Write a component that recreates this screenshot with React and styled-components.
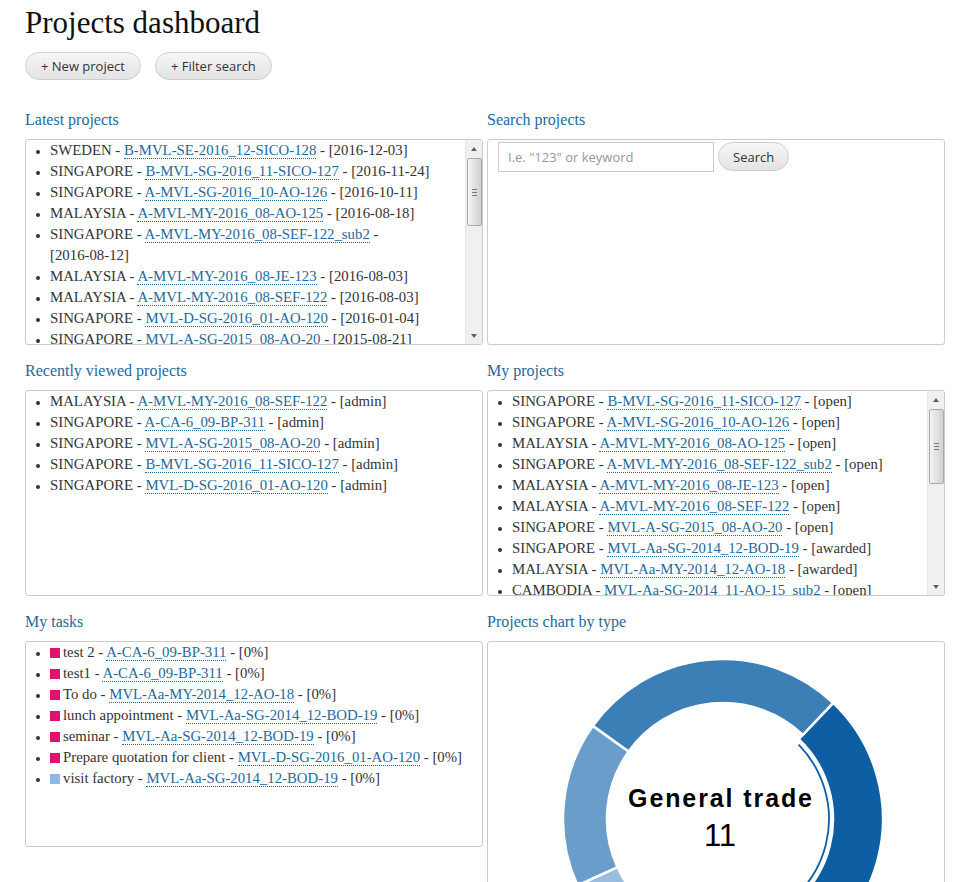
import React from 'react'
import styled, { createGlobalStyle } from 'styled-components'

const GlobalStyle = createGlobalStyle`
	body {
		margin: 0;
		background: #fff;
		color: #333;
		font-family: "Liberation Serif", "Times New Roman", serif;
	}
`

const Page = styled.div`
	padding: 4px 21px 0 25px;
`

const Title = styled.h1`
	margin: 0;
	font-size: 31px;
	font-weight: normal;
	line-height: 38px;
	color: #111;
`

const Actions = styled.div`
	display: flex;
	gap: 14px;
	margin-top: 10px;
`

const PillButton = styled.button`
	height: ${(p) => (p.$small ? '29px' : '28px')};
	padding: 0 ${(p) => (p.$small ? '14px' : '15px')};
	border: 1px solid #cfcfcf;
	border-radius: 15px;
	background: linear-gradient(to bottom, #f6f6f6, #e3e3e3);
	color: #333;
	font-family: "Open Sans", sans-serif;
	font-size: 13px;
	cursor: pointer;
	white-space: nowrap;
`

const Grid = styled.div`
	display: grid;
	grid-template-columns: 458px 458px;
	column-gap: 4px;
	row-gap: 16px;
	align-items: start;
	margin-top: 30px;
`

const Section = styled.section`
	display: flex;
	flex-direction: column;
`

const Heading = styled.h2`
	margin: 0 0 9px;
	font-size: 16px;
	font-weight: normal;
	line-height: 20px;
	color: #25699b;
`

const Box = styled.div`
	display: flex;
	height: ${(p) => p.$height || 206}px;
	box-sizing: border-box;
	border: 1px solid #cccccc;
	border-radius: 3px;
	overflow: hidden;
	background: #fff;
`

const Content = styled.div`
	flex: 1;
	min-width: 0;
	overflow: hidden;
`

const ScrollBar = styled.div`
	display: flex;
	flex-direction: column;
	flex: 0 0 17px;
	background: #f0f0f0;
	border-left: 1px solid #e8e8e8;
	box-sizing: border-box;
`

const Arrow = styled.div`
	flex: 0 0 17px;
	display: flex;
	align-items: center;
	justify-content: center;

	&::before {
		content: "";
		width: 0;
		height: 0;
		border-left: 3.5px solid transparent;
		border-right: 3.5px solid transparent;
		${(p) => (p.$down ? 'border-top: 4px solid #606060;' : 'border-bottom: 4px solid #606060;')}
	}
`

const Track = styled.div`
	flex: 1;
	display: flex;
	flex-direction: column;
	align-items: center;
`

const Thumb = styled.div`
	width: 15px;
	box-sizing: border-box;
	border: 1px solid #a9a9a9;
	border-radius: 2px;
	background-color: #dcdcdc;
	background-image:
		linear-gradient(#7a7a7a, #7a7a7a),
		linear-gradient(#7a7a7a, #7a7a7a),
		linear-gradient(#7a7a7a, #7a7a7a),
		linear-gradient(to right, #f4f4f4, #d0d0d0);
	background-size: 5px 1px, 5px 1px, 5px 1px, 100% 100%;
	background-position: center calc(50% - 3px), center 50%, center calc(50% + 3px), 0 0;
	background-repeat: no-repeat;
`

const List = styled.ul`
	margin: 0;
	padding: 0 ${(p) => p.$padRight || 0}px 0 24px;
	font-size: 14.8px;
	line-height: 21px;
	color: #333;
	list-style: disc;

	li::marker {
		font-size: 12px;
	}
`

const Link = styled.a`
	color: #25699b;
	text-decoration: none;
	border-bottom: 1px dotted #25699b;
	cursor: pointer;
`

const Tag = styled.span`
	white-space: nowrap;
`

const Swatch = styled.span`
	display: inline-block;
	width: 10px;
	height: 10px;
	margin-right: 3px;
	vertical-align: -1px;
	background: ${(p) => p.$color};
`

const SearchRow = styled.form`
	display: flex;
	gap: 4px;
	padding: 2px 10px;
`

const SearchInput = styled.input`
	width: 216px;
	height: 30px;
	box-sizing: border-box;
	padding: 0 9px;
	border: 1px solid #cccccc;
	font-family: "Open Sans", sans-serif;
	font-size: 13px;
	color: #333;
	outline: none;

	&::placeholder {
		color: #999;
	}
`

const latest = [
	['SWEDEN', 'B-MVL-SE-2016_12-SICO-128', '2016-12-03'],
	['SINGAPORE', 'B-MVL-SG-2016_11-SICO-127', '2016-11-24'],
	['SINGAPORE', 'A-MVL-SG-2016_10-AO-126', '2016-10-11'],
	['MALAYSIA', 'A-MVL-MY-2016_08-AO-125', '2016-08-18'],
	['SINGAPORE', 'A-MVL-MY-2016_08-SEF-122_sub2', '2016-08-12'],
	['MALAYSIA', 'A-MVL-MY-2016_08-JE-123', '2016-08-03'],
	['MALAYSIA', 'A-MVL-MY-2016_08-SEF-122', '2016-08-03'],
	['SINGAPORE', 'MVL-D-SG-2016_01-AO-120', '2016-01-04'],
	['SINGAPORE', 'MVL-A-SG-2015_08-AO-20', '2015-08-21'],
	['SINGAPORE', 'MVL-Aa-SG-2014_12-BOD-19', '2014-12-15'],
	['MALAYSIA', 'MVL-Aa-MY-2014_12-AO-18', '2014-12-09'],
	['CAMBODIA', 'MVL-Aa-SG-2014_11-AO-15_sub2', '2014-11-27'],
]

const recent = [
	['MALAYSIA', 'A-MVL-MY-2016_08-SEF-122'],
	['SINGAPORE', 'A-CA-6_09-BP-311'],
	['SINGAPORE', 'MVL-A-SG-2015_08-AO-20'],
	['SINGAPORE', 'B-MVL-SG-2016_11-SICO-127'],
	['SINGAPORE', 'MVL-D-SG-2016_01-AO-120'],
]

const mine = [
	['SINGAPORE', 'B-MVL-SG-2016_11-SICO-127', 'open'],
	['SINGAPORE', 'A-MVL-SG-2016_10-AO-126', 'open'],
	['MALAYSIA', 'A-MVL-MY-2016_08-AO-125', 'open'],
	['SINGAPORE', 'A-MVL-MY-2016_08-SEF-122_sub2', 'open'],
	['MALAYSIA', 'A-MVL-MY-2016_08-JE-123', 'open'],
	['MALAYSIA', 'A-MVL-MY-2016_08-SEF-122', 'open'],
	['SINGAPORE', 'MVL-A-SG-2015_08-AO-20', 'open'],
	['SINGAPORE', 'MVL-Aa-SG-2014_12-BOD-19', 'awarded'],
	['MALAYSIA', 'MVL-Aa-MY-2014_12-AO-18', 'awarded'],
	['CAMBODIA', 'MVL-Aa-SG-2014_11-AO-15_sub2', 'open'],
	['CAMBODIA', 'MVL-Aa-KH-2014_11-AO-15', 'open'],
]

const tasks = [
	['#e5106d', 'test 2', 'A-CA-6_09-BP-311'],
	['#e5106d', 'test1', 'A-CA-6_09-BP-311'],
	['#e5106d', 'To do', 'MVL-Aa-MY-2014_12-AO-18'],
	['#e5106d', 'lunch appointment', 'MVL-Aa-SG-2014_12-BOD-19'],
	['#e5106d', 'seminar', 'MVL-Aa-SG-2014_12-BOD-19'],
	['#e5106d', 'Prepare quotation for client', 'MVL-D-SG-2016_01-AO-120'],
	['#8fb8ea', 'visit factory', 'MVL-Aa-SG-2014_12-BOD-19'],
]

// donut slices, angles in degrees clockwise from 12 o'clock
const slices = [
	{ from: 43.5, to: 165, color: '#0d5ea3', active: true },
	{ from: 165, to: 207, color: '#c3d8ee' },
	{ from: 207, to: 245.5, color: '#9bbddf' },
	{ from: 245.5, to: 305.6, color: '#6a9dc9' },
	{ from: 305.6, to: 403.5, color: '#3b7fb6' },
]

const CX = 235
const CY = 177

function point(r, deg) {
	const a = (deg * Math.PI) / 180
	return [CX + r * Math.sin(a), CY - r * Math.cos(a)]
}

function sector(r0, r1, from, to) {
	const large = to - from > 180 ? 1 : 0
	const [x1, y1] = point(r1, from)
	const [x2, y2] = point(r1, to)
	const [x3, y3] = point(r0, to)
	const [x4, y4] = point(r0, from)
	return `M${x1} ${y1} A${r1} ${r1} 0 ${large} 1 ${x2} ${y2} L${x3} ${y3} A${r0} ${r0} 0 ${large} 0 ${x4} ${y4} Z`
}

function arc(r, from, to) {
	const large = to - from > 180 ? 1 : 0
	const [x1, y1] = point(r, from)
	const [x2, y2] = point(r, to)
	return `M${x1} ${y1} A${r} ${r} 0 ${large} 1 ${x2} ${y2}`
}

function Donut() {
	return (
		<svg width="456" height="340" viewBox="0 0 456 340">
			{slices.map((s) => (
				<path
					key={s.from}
					d={sector(s.active ? 110 : 116, 160, s.from, s.to)}
					fill={s.color}
					stroke="#fff"
					strokeWidth="2.5"
				/>
			))}
			<path d={arc(106, 45.5, 163)} fill="none" stroke="#0d5ea3" strokeWidth="1.8" />
			<text
				x={CX - 2}
				y="165"
				textAnchor="middle"
				fontFamily="'Liberation Sans', Arial, sans-serif"
				fontWeight="bold"
				fontSize="25"
				letterSpacing="1.9"
				fill="#000"
			>
				General trade
			</text>
			<text
				x={CX - 3}
				y="204"
				textAnchor="middle"
				fontFamily="'Liberation Sans', Arial, sans-serif"
				fontSize="31"
				fill="#000"
			>
				11
			</text>
		</svg>
	)
}

function FakeScroll({ offset, size }) {
	return (
		<ScrollBar>
			<Arrow />
			<Track>
				<Thumb style={{ marginTop: offset, height: size }} />
			</Track>
			<Arrow $down />
		</ScrollBar>
	)
}

function App() {
	return (
		<>
			<GlobalStyle />
			<Page>
				<Title>Projects dashboard</Title>
				<Actions>
					<PillButton>+ New project</PillButton>
					<PillButton>+ Filter search</PillButton>
				</Actions>

				<Grid>
					<Section>
						<Heading>Latest projects</Heading>
						<Box>
							<Content>
								<List $padRight={10}>
									{latest.map(([country, code, date]) => (
										<li key={code + date}>
											{country} - <Link>{code}</Link> - <Tag>[{date}]</Tag>
										</li>
									))}
								</List>
							</Content>
							<FakeScroll offset={1} size={68} />
						</Box>
					</Section>

					<Section>
						<Heading>Search projects</Heading>
						<Box>
							<Content>
								<SearchRow onSubmit={(e) => e.preventDefault()}>
									<SearchInput placeholder='I.e. "123" or keyword' />
									<PillButton $small>Search</PillButton>
								</SearchRow>
							</Content>
						</Box>
					</Section>

					<Section>
						<Heading>Recently viewed projects</Heading>
						<Box>
							<Content>
								<List>
									{recent.map(([country, code]) => (
										<li key={code}>
											{country} - <Link>{code}</Link> - <Tag>[admin]</Tag>
										</li>
									))}
								</List>
							</Content>
						</Box>
					</Section>

					<Section>
						<Heading>My projects</Heading>
						<Box>
							<Content>
								<List>
									{mine.map(([country, code, status]) => (
										<li key={code + status}>
											{country} - <Link>{code}</Link> - <Tag>[{status}]</Tag>
										</li>
									))}
								</List>
							</Content>
							<FakeScroll offset={1} size={75} />
						</Box>
					</Section>

					<Section>
						<Heading>My tasks</Heading>
						<Box>
							<Content>
								<List>
									{tasks.map(([color, name, code]) => (
										<li key={name}>
											<Swatch $color={color} />
											{name} - <Link>{code}</Link> - <Tag>[0%]</Tag>
										</li>
									))}
								</List>
							</Content>
						</Box>
					</Section>

					<Section>
						<Heading>Projects chart by type</Heading>
						<Box $height={340}>
							<Content>
								<Donut />
							</Content>
						</Box>
					</Section>
				</Grid>
			</Page>
		</>
	)
}

export default App
